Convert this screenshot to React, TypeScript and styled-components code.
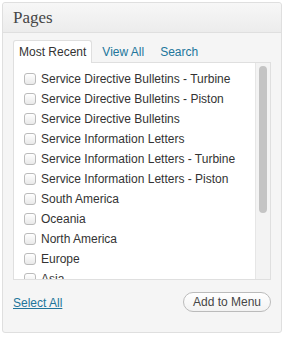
import React, { useState } from "react";
import styled, { createGlobalStyle } from "styled-components";

const GlobalStyle = createGlobalStyle`
  body {
    margin: 0;
    background: #ffffff;
    font-family: "Liberation Sans", Arial, sans-serif;
  }
`;

const Box = styled.div`
  box-sizing: border-box;
  width: 280px;
  height: 331px;
  margin: 2px 0 0 2px;
  border: 1px solid #dfdfdf;
  border-radius: 3px;
  background: #f5f5f5;
  display: flex;
  flex-direction: column;
`;

const Header = styled.h3`
  margin: 0;
  height: 30px;
  box-sizing: border-box;
  padding: 0 10px;
  display: flex;
  align-items: center;
  border-bottom: 1px solid #dfdfdf;
  background: linear-gradient(to bottom, #f7f7f7, #ececec);
  border-radius: 3px 3px 0 0;
  font-family: "Liberation Serif", "Times New Roman", serif;
  font-weight: normal;
  font-size: 17px;
  color: #464646;
`;

const Inside = styled.div`
  padding: 7px 10px 0;
  display: flex;
  flex-direction: column;
`;

const Tabs = styled.div`
  display: flex;
  height: 22px;
  position: relative;
  z-index: 1;
`;

const Tab = styled.span<{ $active?: boolean }>`
  box-sizing: border-box;
  height: 23px;
  padding: 0 5px;
  margin-right: 4px;
  display: flex;
  align-items: center;
  font-size: 12px;
  border: 1px solid ${({ $active }) => ($active ? "#dfdfdf" : "transparent")};
  border-bottom: none;
  border-radius: 3px 3px 0 0;
  background: ${({ $active }) => ($active ? "#ffffff" : "transparent")};
  color: ${({ $active }) => ($active ? "#333333" : "#21759b")};
  cursor: pointer;
`;

const Panel = styled.div`
  box-sizing: border-box;
  width: 258px;
  height: 218px;
  border: 1px solid #dfdfdf;
  background: #ffffff;
  display: flex;
  overflow: hidden;
`;

const List = styled.ul`
  flex: 1;
  list-style: none;
  margin: 0;
  padding: 6px 0 6px 10px;
  overflow: hidden;
`;

const ScrollTrack = styled.div`
  width: 15px;
  flex-shrink: 0;
  box-sizing: border-box;
  background: #f3f3f3;
  border-left: 1px solid #e6e6e6;
  padding: 3px 3px 0 3px;
`;

const ScrollThumb = styled.div`
  width: 8px;
  height: 147px;
  border-radius: 5px;
  background: #c4c4c4;
`;

const Item = styled.li`
  height: 20px;
  display: flex;
  align-items: center;
  gap: 5px;
  font-size: 12px;
  color: #333333;
  white-space: nowrap;
`;

const Check = styled.input`
  appearance: none;
  margin: 0;
  width: 12px;
  height: 12px;
  border: 1px solid #bbbbbb;
  border-radius: 3px;
  background: linear-gradient(to bottom, #ffffff, #e9e9e9);
  flex-shrink: 0;

  &:checked {
    background: #21759b;
  }
`;

const Footer = styled.div`
  display: flex;
  justify-content: space-between;
  align-items: center;
  margin-top: 12px;
`;

const SelectAll = styled.a`
  font-size: 12px;
  color: #21759b;
  text-decoration: underline;
  margin-top: 2px;
  cursor: pointer;
`;

const Button = styled.button`
  box-sizing: border-box;
  height: 20px;
  padding: 0 9px;
  border: 1px solid #bbbbbb;
  border-radius: 11px;
  background: linear-gradient(to bottom, #ffffff, #f2f2f2);
  font-family: "Liberation Sans", Arial, sans-serif;
  font-size: 12px;
  color: #464646;
  cursor: pointer;
`;

const pages = [
  "Service Directive Bulletins - Turbine",
  "Service Directive Bulletins - Piston",
  "Service Directive Bulletins",
  "Service Information Letters",
  "Service Information Letters - Turbine",
  "Service Information Letters - Piston",
  "South America",
  "Oceania",
  "North America",
  "Europe",
  "Asia",
  "Africa",
  "Contact",
  "About",
  "Home",
];

export default function App() {
  const [checked, setChecked] = useState<boolean[]>(pages.map(() => false));

  const toggle = (i: number) => {
    setChecked(checked.map((c, j) => (j === i ? !c : c)));
  };

  return (
    <>
      <GlobalStyle />
      <Box>
        <Header>Pages</Header>
        <Inside>
          <Tabs>
            <Tab $active>Most Recent</Tab>
            <Tab>View All</Tab>
            <Tab>Search</Tab>
          </Tabs>
          <Panel>
            <List>
              {pages.map((p, i) => (
                <Item key={p}>
                  <Check
                    type="checkbox"
                    checked={checked[i]}
                    onChange={() => toggle(i)}
                  />
                  {p}
                </Item>
              ))}
            </List>
            <ScrollTrack>
              <ScrollThumb />
            </ScrollTrack>
          </Panel>
          <Footer>
            <SelectAll onClick={() => setChecked(pages.map(() => true))}>
              Select All
            </SelectAll>
            <Button>Add to Menu</Button>
          </Footer>
        </Inside>
      </Box>
    </>
  );
}
